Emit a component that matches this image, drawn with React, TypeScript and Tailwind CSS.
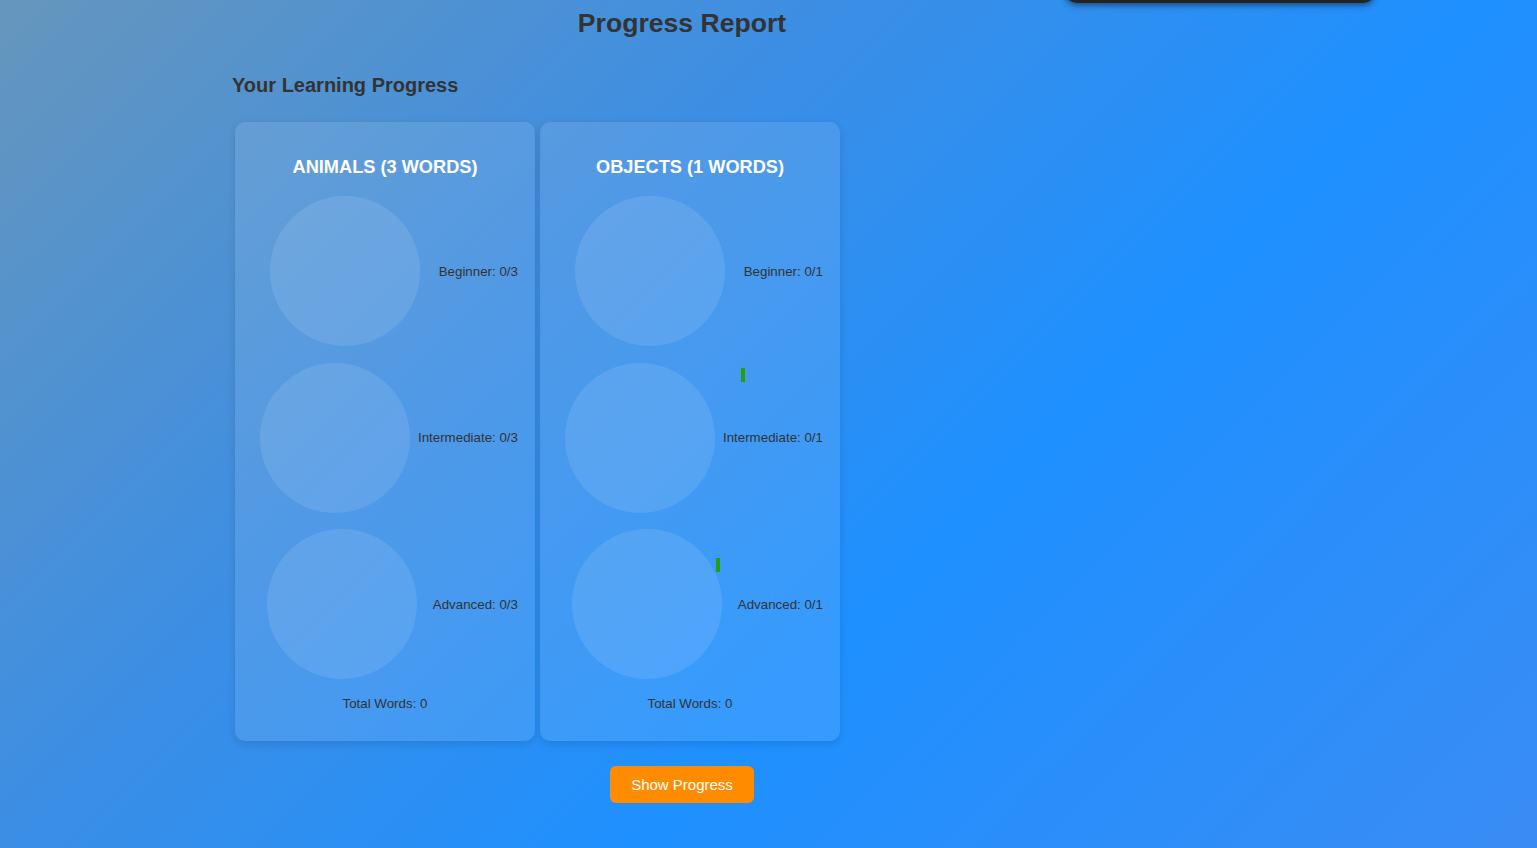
import React from "react";

const CATEGORIES = [
  { id: 0, name: "Animals", total: 3, marks: [] as { x: number; y: number }[] },
  {
    id: 1,
    name: "Objects",
    total: 1,
    marks: [
      { x: 201, y: 246 },
      { x: 176, y: 436 },
    ],
  },
];

const LEVELS = ["Beginner", "Intermediate", "Advanced"];

function CategoryCard({ cat }: { cat: (typeof CATEGORIES)[number] }) {
  return (
    <div className="relative w-[300px] rounded-[10px] bg-white/10 px-[17px] pt-[17px] pb-[30px] shadow-[0_3px_8px_rgba(0,0,0,0.12)]">
      <h3 className="my-[18px] text-center text-[18.2px] leading-[21px] font-bold uppercase text-white">
        {cat.name} ({cat.total} words)
      </h3>
      <div className="flex flex-col gap-[16.5px]">
        {LEVELS.map((level) => (
          <div key={level} className="flex items-center">
            <div className="flex flex-1 justify-center">
              <div className="h-[150px] w-[150px] rounded-full bg-white/10" />
            </div>
            <span className="text-[13.33px] leading-[15px] text-[#333]">
              {level}: 0/{cat.total}
            </span>
          </div>
        ))}
      </div>
      <p className="mt-[16.5px] text-center text-[13.33px] leading-[15px] text-[#333]">
        Total Words: 0
      </p>
      {cat.marks.map((m, i) => (
        <span
          key={i}
          className="absolute h-[14px] w-[4px] bg-[#23a00c]"
          style={{ left: m.x, top: m.y }}
        />
      ))}
    </div>
  );
}

export default function App() {
  return (
    <div className="relative min-h-screen overflow-hidden bg-[linear-gradient(135deg,#6696bc_0%,#3c8ee4_35%,#1e90ff_62%,#3a8cf4_100%)] font-['Liberation_Sans',Arial,sans-serif]">
      <div className="absolute left-[1065px] top-[-40px] h-[43px] w-[310px] rounded-[12px] bg-[#232323] shadow-[0_2px_6px_rgba(0,0,0,0.5)]" />
      <div className="ml-[232px] w-[900px] pt-[8px] pb-[45px]">
        <h1 className="text-center text-[26.6px] leading-[30px] font-bold text-[#333]">
          Progress Report
        </h1>
        <h2 className="mt-[36px] text-[20px] leading-[23px] font-bold text-[#333]">
          Your Learning Progress
        </h2>
        <div className="mt-[25px] flex gap-[5px] px-[3px]">
          {CATEGORIES.map((cat) => (
            <CategoryCard key={cat.id} cat={cat} />
          ))}
        </div>
        <div className="mt-[25px] flex justify-center">
          <button className="rounded-[6px] bg-[#ff8c00] px-[21px] py-[10px] text-[15px] leading-[17px] text-white">
            Show Progress
          </button>
        </div>
      </div>
    </div>
  );
}
